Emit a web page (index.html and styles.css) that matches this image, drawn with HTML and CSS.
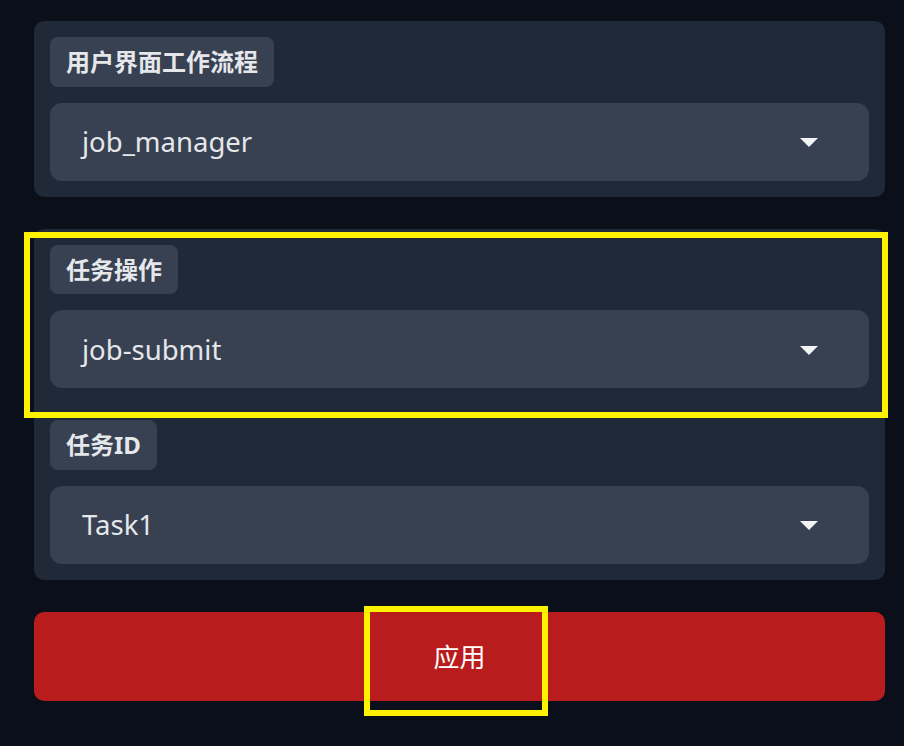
FILE: index.html
```html
<!DOCTYPE html>
<html lang="zh">
<head>
    <meta charset="UTF-8">
    <meta name="viewport" content="width=device-width, initial-scale=1.0">
    <title>任务操作</title>
    <link rel="stylesheet" href="styles.css">
</head>
<body>

<div class="page">

    <div class="card">
        <div class="field">
            <span class="label">用户界面工作流程</span>
            <div class="select">
                <span>job_manager</span>
                <svg class="caret" viewBox="0 0 18 9"><path d="M0 0h18L9 9z" fill="#f3f4f6"/></svg>
            </div>
        </div>
    </div>

    <div class="card">
        <div class="field">
            <span class="label">任务操作</span>
            <div class="select">
                <span>job-submit</span>
                <svg class="caret" viewBox="0 0 18 9"><path d="M0 0h18L9 9z" fill="#f3f4f6"/></svg>
            </div>
        </div>
        <div class="field">
            <span class="label">任务ID</span>
            <div class="select">
                <span>Task1</span>
                <svg class="caret" viewBox="0 0 18 9"><path d="M0 0h18L9 9z" fill="#f3f4f6"/></svg>
            </div>
        </div>
    </div>

    <button class="apply">应用</button>

    <!-- annotation boxes drawn over the form -->
    <div class="highlight hl-action"></div>
    <div class="highlight hl-apply"></div>
</div>

</body>
</html>
```

FILE: styles.css
```css
body {
    margin: 0;
    background: #0b0f19;
    font-family: "Noto Sans", "Noto Sans CJK SC", sans-serif;
    color: #e5e7eb;
}

.page {
    position: relative;
    display: flex;
    flex-direction: column;
    gap: 32px;
    padding: 21px 19px 0 34px;
    height: 746px;
    box-sizing: border-box;
}

.card {
    background: #1f2937;
    border-radius: 10px;
}

.field {
    display: flex;
    flex-direction: column;
    align-items: flex-start;
    gap: 16px;
    padding: 16px;
}

.label {
    background: #374151;
    border-radius: 8px;
    padding: 8px 16px;
    font-size: 24px;
    font-weight: 700;
    line-height: 33.5px;
    color: #e5e7eb;
}

.select {
    align-self: stretch;
    height: 78px;
    display: flex;
    align-items: center;
    justify-content: space-between;
    padding: 0 51px 0 32px;
    background: #374151;
    border-radius: 12px;
    font-size: 27.5px;
    color: #e5e7eb;
}

.caret {
    width: 18px;
    height: 9px;
    margin-top: 2px;
}

.apply {
    flex: none;
    height: 89px;
    border: none;
    border-radius: 10px;
    background: #b91c1c;
    color: #ffffff;
    font-family: inherit;
    font-size: 26px;
    font-weight: 400;
    cursor: pointer;
}

.highlight {
    position: absolute;
    box-sizing: border-box;
    border: 6px solid #fff200;
}

.hl-action {
    left: 24px;
    top: 232px;
    width: 864px;
    height: 186px;
}

.hl-apply {
    left: 364px;
    top: 606px;
    width: 184px;
    height: 110px;
}
```
